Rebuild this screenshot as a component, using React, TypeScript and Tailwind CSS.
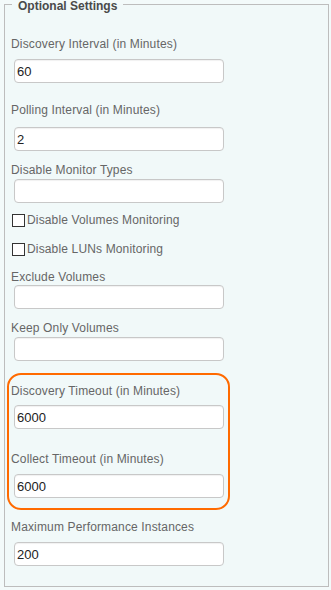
import React from "react";

const font = { fontFamily: '"Liberation Sans", Arial, sans-serif' };

function Label({ text, className }: { text: string; className: string }) {
  return (
    <div className={`text-[12px] leading-[14px] tracking-[0.15px] text-[#666666] ${className}`}>{text}</div>
  );
}

function Field({ value, className }: { value: string; className: string }) {
  return (
    <input
      readOnly
      value={value}
      className={`ml-[3px] block h-[24px] w-[210px] rounded-[4px] border border-[#c8c8c8] bg-white pl-[2px] text-[13px] text-[#222222] outline-none shadow-[inset_0_1px_1px_rgba(0,0,0,0.06)] ${className}`}
    />
  );
}

function Check({ text, className }: { text: string; className: string }) {
  return (
    <label className={`flex h-[14px] items-center text-[12px] leading-[14px] tracking-[0.15px] text-[#666666] ${className}`}>
      <input
        type="checkbox"
        className="ml-[1px] mr-[2px] h-[13px] w-[13px] appearance-none border border-[#333333] bg-white"
      />
      <span>{text}</span>
    </label>
  );
}

export default function App() {
  return (
    <div className="min-h-[590px] w-[331px] bg-[#f3fafa] pt-0" style={font}>
      <fieldset className="ml-[4px] h-[587px] w-[325px] border border-[#bdbdbd] bg-[#f1f9f9] px-[6px] pb-[20px]">
        <legend className="ml-[1px] px-[6px] text-[12px] font-bold leading-[9px] text-[#4a4a4a]">
          <span className="relative top-[2px]">Optional Settings</span>
        </legend>

        <Label text="Discovery Interval (in Minutes)" className="mt-[28px]" />
        <Field value="60" className="mt-[8px]" />

        <Label text="Polling Interval (in Minutes)" className="mt-[20px]" />
        <Field value="2" className="mt-[10px]" />

        <Label text="Disable Monitor Types" className="mt-[12px]" />
        <Field value="" className="mt-[2px]" />

        <Check text="Disable Volumes Monitoring" className="mt-[10px]" />
        <Check text="Disable LUNs Monitoring" className="mt-[15px]" />

        <Label text="Exclude Volumes" className="mt-[14px]" />
        <Field value="" className="mt-[1px]" />

        <Label text="Keep Only Volumes" className="mt-[12px]" />
        <Field value="" className="mt-[2px]" />

        <div className="-ml-[4px] mt-[12px] w-[223px] rounded-[14px] border-2 border-[#ff6a00] pl-[2px] pt-[9px] pb-[10px]">
          <Label text="Discovery Timeout (in Minutes)" className="" />
          <Field value="6000" className="mt-[7px]" />
          <Label text="Collect Timeout (in Minutes)" className="mt-[23px]" />
          <Field value="6000" className="mt-[8px]" />
        </div>

        <Label text="Maximum Performance Instances" className="mt-[10px]" />
        <Field value="200" className="mt-[8px]" />
      </fieldset>
    </div>
  );
}
